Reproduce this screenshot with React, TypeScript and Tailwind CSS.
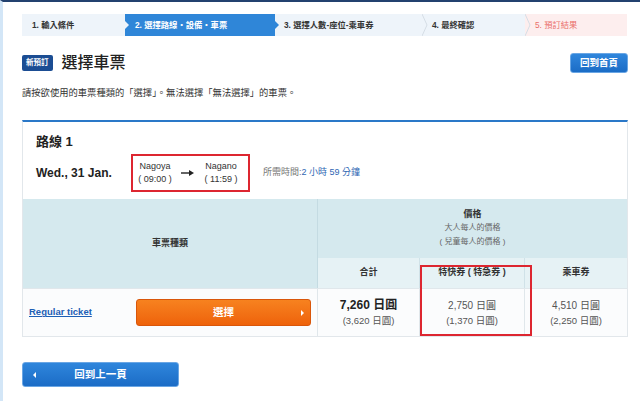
import React from "react";

function Chevron() {
  return (
    <svg className="absolute left-0 top-0" width="6" height="22" viewBox="0 0 6 22">
      <polyline points="0,0 5,11 0,22" fill="none" stroke="#d5dde5" strokeWidth="1" />
    </svg>
  );
}

export default function App() {
  return (
    <div className="w-[640px] h-[401px] overflow-hidden bg-white border-t-2 border-t-[#23416f] border-l-[3px] border-l-[#d3e6f7] font-['Liberation_Sans','Noto_Sans_CJK_TC',sans-serif] text-[#333]">
      <div className="pl-[19px] pr-[12px] pt-[12px]">
        {/* Steps */}
        <div className="flex h-[22px] text-[8.3px] font-bold leading-none">
          <div className="w-[103px] bg-[#eef4fa] flex items-center pl-[10px] text-[#333]">1. 輸入條件</div>
          <div className="relative w-[150px] bg-[#2f86d8] flex items-center pl-[10px] text-white">
            <span className="absolute left-0 top-1/2 -translate-y-1/2 w-0 h-0 border-y-[4px] border-y-transparent border-l-[4px] border-l-[#eef4fa]" />
            <span className="absolute right-[-4px] top-1/2 -translate-y-1/2 w-0 h-0 border-y-[4px] border-y-transparent border-l-[4px] border-l-[#2f86d8] z-10" />
            2. 選擇路線・設備・車票
          </div>
          <div className="w-[147px] bg-[#eef4fa] flex items-center pl-[9px] text-[#333]">3. 選擇人數-座位-乘車券</div>
          <div className="relative w-[103px] bg-[#eef4fa] flex items-center pl-[10px] text-[#333]">
            <Chevron />
            4. 最終確認
          </div>
          <div className="relative w-[102px] bg-[#fdeeee] flex items-center pl-[10px] text-[#ea6f6a] font-normal">
            <Chevron />
            5. 預訂結果
          </div>
        </div>

        {/* Title row */}
        <div className="mt-[17px] flex items-center justify-between h-[20px]">
          <div className="flex items-center">
            <span className="h-[16px] px-[4px] flex items-center bg-[#1b4d93] rounded-[2px] text-white text-[7.5px] font-bold">新預訂</span>
            <span className="ml-[9px] text-[16px] leading-none text-[#222] font-medium">選擇車票</span>
          </div>
          <button className="w-[58px] h-[20px] rounded-[3px] border border-[#6aa6e4] bg-linear-to-b from-[#2f86dc] to-[#1b6cc6] text-white text-[9.5px] font-bold flex items-center justify-center">回到首頁</button>
        </div>

        {/* Instruction */}
        <div className="mt-[14px] text-[9.3px] leading-[12px] text-[#333]">請按欲使用的車票種類的「選擇」。無法選擇「無法選擇」的車票。</div>

        {/* Card */}
        <div className="mt-[21px] border-t-2 border-t-[#2a78c8] border-x border-b border-x-[#e2e7eb] border-b-[#e2e7eb]">
          <div className="px-[13px] pt-[12px] pb-[7px]">
            <div className="text-[13px] font-bold leading-[16px] text-[#222]">路線 1</div>
            <div className="mt-[4px] flex items-center">
              <span className="text-[12px] font-bold text-[#222] w-[74px] whitespace-nowrap">Wed., 31 Jan.</span>
              <div className="ml-[21px] w-[119px] h-[38px] border-2 border-[#dd2630] flex items-center pl-[3px] text-[9px] leading-[13px] text-[#333]">
                <div className="w-[38px] flex flex-col items-center">
                  <span>Nagoya</span>
                  <span className="whitespace-pre">( 09:00 )</span>
                </div>
                <svg className="ml-[7px]" width="13" height="6" viewBox="0 0 13 6">
                  <line x1="0" y1="3" x2="9" y2="3" stroke="#222" strokeWidth="1.4" />
                  <polygon points="8,0 13,3 8,6" fill="#222" />
                </svg>
                <div className="ml-[8px] w-[38px] flex flex-col items-center">
                  <span>Nagano</span>
                  <span className="whitespace-pre">( 11:59 )</span>
                </div>
              </div>
              <span className="ml-[13px] text-[9px] text-[#777]">
                所需時間:<span className="text-[#2f66b3]">2 小時 59 分鐘</span>
              </span>
            </div>
          </div>

          {/* Table */}
          <div className="relative grid grid-cols-[295px_102px_105px_1fr] text-[#333]">
            <div className="row-span-2 bg-[#d5e9ee] border-r border-[#c4dbe2] flex items-center justify-center text-[9px] font-bold">車票種類</div>
            <div className="col-span-3 h-[59px] bg-[#d5e9ee] flex flex-col items-center pt-[9px]">
              <span className="text-[9px] font-bold leading-[13px]">價格</span>
              <span className="text-[8px] leading-[14px] text-[#666]">大人每人的價格</span>
              <span className="text-[8px] leading-[14px] text-[#666] whitespace-pre">( 兒童每人的價格 )</span>
            </div>
            <div className="h-[30px] bg-[#e6f2f5] border-r border-[#d0e2e8] flex items-center justify-center text-[9px] font-bold">合計</div>
            <div className="h-[30px] bg-[#e6f2f5] border-r border-[#d0e2e8] flex items-center justify-center text-[9px] font-bold whitespace-pre">特快券 ( 特急券 )</div>
            <div className="h-[30px] bg-[#e6f2f5] flex items-center justify-center text-[9px] font-bold">乘車券</div>

            <div className="h-[48px] bg-[#fbfcfd] border-t border-r border-[#e0e7eb] flex items-center justify-between pl-[6px] pr-[6px]">
              <a className="text-[9.5px] font-bold text-[#1d5fb5] underline">Regular ticket</a>
              <button className="relative w-[175px] h-[27px] rounded-[3px] border border-[#d9560a] bg-linear-to-b from-[#f7821f] to-[#ee620a] text-white text-[10.5px] font-bold flex items-center justify-center">
                選擇
                <span className="absolute right-[6px] top-1/2 -translate-y-1/2 w-0 h-0 border-y-[3px] border-y-transparent border-l-[3px] border-l-white" />
              </button>
            </div>
            <div className="h-[48px] bg-[#fbfcfd] border-t border-r border-[#e0e7eb] flex flex-col items-center justify-center">
              <span className="text-[12px] font-bold leading-[15px] text-[#222]">7,260 日圓</span>
              <span className="text-[9.5px] leading-[15px] text-[#555]">(3,620 日圓)</span>
            </div>
            <div className="h-[48px] bg-[#fbfcfd] border-t border-r border-[#e0e7eb] flex flex-col items-center justify-center">
              <span className="text-[10px] leading-[15px] text-[#555]">2,750 日圓</span>
              <span className="text-[9.5px] leading-[15px] text-[#555]">(1,370 日圓)</span>
            </div>
            <div className="h-[48px] bg-[#fbfcfd] border-t border-[#e0e7eb] flex flex-col items-center justify-center">
              <span className="text-[10px] leading-[15px] text-[#555]">4,510 日圓</span>
              <span className="text-[9.5px] leading-[15px] text-[#555]">(2,250 日圓)</span>
            </div>

            <div className="absolute left-[397px] top-[66px] w-[112px] h-[71px] border-2 border-[#dd2630] pointer-events-none" />
          </div>
        </div>

        {/* Back button */}
        <button className="mt-[25px] relative w-[157px] h-[25px] rounded-[3px] border border-[#6aa6e4] bg-linear-to-b from-[#2f86dc] to-[#1b6cc6] text-white text-[10.5px] font-bold flex items-center justify-center">
          <span className="absolute left-[10px] top-1/2 -translate-y-1/2 w-0 h-0 border-y-[3px] border-y-transparent border-r-[3px] border-r-white" />
          回到上一頁
        </button>
      </div>
    </div>
  );
}
